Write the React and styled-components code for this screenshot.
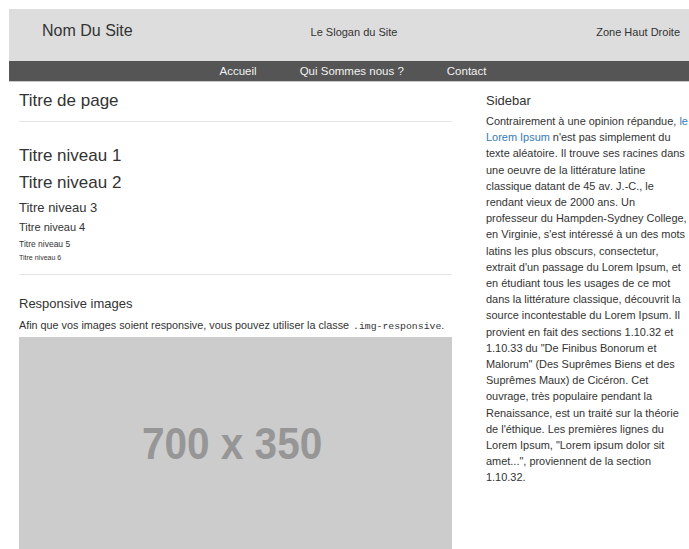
import styled, { createGlobalStyle } from "styled-components";

const GlobalStyle = createGlobalStyle`
  body {
    margin: 9px 0 0 9px;
    background: #fff;
    font-family: "Liberation Sans", Arial, sans-serif;
    color: #333;
  }
`;

const Page = styled.div`
  width: 680px;
`;

const Header = styled.header`
  display: grid;
  grid-template-columns: 1fr 1fr 1fr;
  align-items: center;
  height: 52px;
  box-sizing: border-box;
  background: #dddddd;
  padding: 0 9px 7px 33px;
`;

const SiteName = styled.div`
  font-size: 16px;
  color: #333;
  margin-top: -2px;
`;

const Slogan = styled.div`
  font-size: 11px;
  text-align: center;
  color: #333;
  margin-left: -14px;
`;

const TopRight = styled.div`
  font-size: 11px;
  text-align: right;
  color: #333;
`;

const Nav = styled.nav`
  display: flex;
  justify-content: center;
  gap: 43px;
  height: 20px;
  align-items: center;
  background: #555555;
  border-bottom: 1px solid #c8c8c8;
  padding-left: 8px;
`;

const NavLink = styled.a`
  color: #f2f2f2;
  font-size: 11.5px;
  text-decoration: none;
`;

const Main = styled.main`
  display: grid;
  grid-template-columns: 433px 203px;
  column-gap: 34px;
  padding-left: 10px;
`;

const Content = styled.section`
  display: flex;
  flex-direction: column;
`;

const Heading = styled.div`
  font-size: ${(p) => p.$size}px;
  line-height: ${(p) => p.$lh}px;
  margin-top: ${(p) => p.$mt}px;
  color: #333;
  font-weight: normal;
`;

const Rule = styled.hr`
  border: 0;
  border-top: 1px solid #e6e6e6;
  margin: ${(p) => p.$mt}px 0 0;
  width: 100%;
`;

const Lead = styled.p`
  font-size: 10.8px;
  line-height: 14px;
  margin: 6px 0 0;
  color: #333;
  white-space: nowrap;
`;

const Code = styled.code`
  font-family: "Liberation Mono", "Courier New", monospace;
  font-size: 9.8px;
  color: #333;
  margin-left: 4px;
`;

const Placeholder = styled.div`
  margin-top: 3px;
  height: 217px;
  background: #cccccc;
  display: flex;
  align-items: center;
  justify-content: center;
`;

const PlaceholderLabel = styled.span`
  display: inline-block;
  font-size: 45px;
  font-weight: bold;
  color: #969696;
  transform: scaleX(0.9);
  margin: 0 6px 2px 0;
`;

const Sidebar = styled.aside`
  display: flex;
  flex-direction: column;
`;

const SidebarText = styled.p`
  width: 203px;
  font-size: 10.95px;
  line-height: 16.2px;
  margin: 4px 0 0;
  color: #333;
  font-kerning: none;
`;

const Link = styled.a`
  color: #337ab7;
  text-decoration: none;
`;

export default function App() {
  return (
    <>
      <GlobalStyle />
      <Page>
        <Header>
          <SiteName>Nom Du Site</SiteName>
          <Slogan>Le Slogan du Site</Slogan>
          <TopRight>Zone Haut Droite</TopRight>
        </Header>
        <Nav>
          <NavLink href="#">Accueil</NavLink>
          <NavLink href="#">Qui Sommes nous ?</NavLink>
          <NavLink href="#">Contact</NavLink>
        </Nav>
        <Main>
          <Content>
            <Heading $size={17} $lh={20} $mt={9}>Titre de page</Heading>
            <Rule $mt={10} />
            <Heading $size={17} $lh={20} $mt={24}>Titre niveau 1</Heading>
            <Heading $size={17} $lh={20} $mt={7}>Titre niveau 2</Heading>
            <Heading $size={13} $lh={16} $mt={7}>Titre niveau 3</Heading>
            <Heading $size={11} $lh={14} $mt={4}>Titre niveau 4</Heading>
            <Heading $size={8.5} $lh={11} $mt={4.5}>Titre niveau 5</Heading>
            <Heading $size={7} $lh={9} $mt={3}>Titre niveau 6</Heading>
            <Rule $mt={12} />
            <Heading $size={13} $lh={16} $mt={21}>Responsive images</Heading>
            <Lead>
              Afin que vos images soient responsive, vous pouvez utiliser la classe
              <Code>.img-responsive</Code>.
            </Lead>
            <Placeholder>
              <PlaceholderLabel>700 x 350</PlaceholderLabel>
            </Placeholder>
          </Content>
          <Sidebar>
            <Heading $size={13} $lh={16} $mt={11}>Sidebar</Heading>
            <SidebarText>
              Contrairement à une opinion répandue, <Link href="#">le Lorem Ipsum</Link> n'est
              pas simplement du texte aléatoire. Il trouve ses racines dans une oeuvre de la
              littérature latine classique datant de 45 av. J.-C., le rendant vieux de 2000 ans.
              Un professeur du Hampden-Sydney College, en Virginie, s'est intéressé à un des
              mots latins les plus obscurs, consectetur, extrait d'un passage du Lorem Ipsum, et
              en étudiant tous les usages de ce mot dans la littérature classique, découvrit la
              source incontestable du Lorem Ipsum. Il provient en fait des sections 1.10.32 et
              1.10.33 du "De Finibus Bonorum et Malorum" (Des Suprêmes Biens et des Suprêmes
              Maux) de Cicéron. Cet ouvrage, très populaire pendant la Renaissance, est un traité
              sur la théorie de l'éthique. Les premières lignes du Lorem Ipsum, "Lorem ipsum
              dolor sit amet...", proviennent de la section 1.10.32.
            </SidebarText>
          </Sidebar>
        </Main>
      </Page>
    </>
  );
}
